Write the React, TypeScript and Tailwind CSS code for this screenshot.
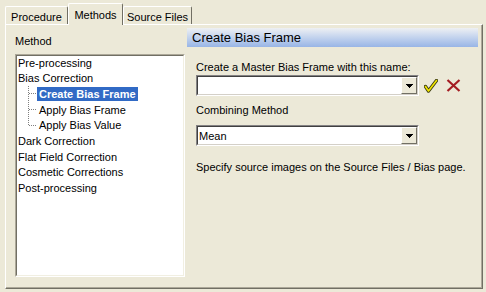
import React from "react";

const font = "[font-family:'Liberation_Sans',Arial,sans-serif]";

function Tab({ label, selected, width }: { label: string; selected?: boolean; width: string }) {
  if (selected) {
    return (
      <div
        className={`${width} relative z-10 -mb-px h-[22px] flex items-start justify-center pt-[4px] bg-[#ece9d8] border-l border-t border-white border-r border-r-[#716f64] rounded-t-[2px]`}
      >
        <span className="leading-[14px]">{label}</span>
      </div>
    );
  }
  return (
    <div
      className={`${width} h-[18px] flex items-start justify-center pt-[3px] bg-[#ece9d8] border-l border-t border-white border-r border-r-[#716f64] rounded-t-[2px]`}
    >
      <span className="leading-[14px]">{label}</span>
    </div>
  );
}

function Connector({ last }: { last?: boolean }) {
  return (
    <svg width="9" height="15.7" className="shrink-0 block" shapeRendering="crispEdges">
      <line x1="0.5" y1="0" x2="0.5" y2={last ? 8 : 15.7} stroke="#808080" strokeDasharray="1 1" />
      <line x1="1" y1="7.5" x2="8" y2="7.5" stroke="#808080" strokeDasharray="1 1" />
    </svg>
  );
}

function Row({ children }: { children: React.ReactNode }) {
  return <div className="h-[15.7px] flex items-center whitespace-nowrap">{children}</div>;
}

function Combo({ value }: { value?: string }) {
  return (
    <div className="w-[223px] h-[21px] border border-t-[#848284] border-l-[#848284] border-b-white border-r-white">
      <div className="w-full h-full border border-t-[#404040] border-l-[#404040] border-b-[#d4d0c8] border-r-[#d4d0c8] bg-white flex items-center">
        <div className="flex-1 pl-[1px] leading-[14px]">{value ?? ""}</div>
        <div className="w-[16px] h-[17px] bg-[#ece9d8] border border-t-white border-l-white border-b-[#716f64] border-r-[#716f64] flex items-center justify-center">
          <svg width="7" height="4" className="block" shapeRendering="crispEdges">
            <polygon points="0,0 7,0 3.5,4" fill="#000" />
          </svg>
        </div>
      </div>
    </div>
  );
}

export default function App() {
  return (
    <div className={`w-[486px] h-[292px] bg-[#ece9d8] overflow-hidden text-[11px] text-black ${font}`}>
      {/* tabs */}
      <div className="h-[24px] flex items-end pl-[5px]">
        <Tab label="Procedure" width="w-[63px]" />
        <Tab label="Methods" width="w-[55px]" selected />
        <Tab label="Source Files" width="w-[69px]" />
      </div>
      {/* panel */}
      <div className="ml-[5px] w-[478px] h-[265px] border-l border-t border-white border-r border-b border-r-[#716f64] border-b-[#716f64]">
        <div className="w-full h-full border-r border-b border-r-[#aca899] border-b-[#aca899] flex">
          {/* left column */}
          <div className="ml-[9px] w-[170px] flex flex-col">
            <div className="pt-[9px] leading-[14px] mb-[6px]">Method</div>
            <div className="h-[223px] border border-t-[#aca899] border-l-[#aca899] border-b-white border-r-white">
              <div className="w-full h-full border border-t-[#716f64] border-l-[#716f64] border-b-[#f1efe2] border-r-[#f1efe2] bg-white">
                <div className="-mt-px pl-[1px]">
                  <Row>Pre-processing</Row>
                  <Row>Bias Correction</Row>
                  <Row>
                    <div className="w-[10px] shrink-0" />
                    <Connector />
                    <span className="bg-[#316ac5] text-white font-bold px-[2px] leading-[14px]">Create Bias Frame</span>
                  </Row>
                  <Row>
                    <div className="w-[10px] shrink-0" />
                    <Connector />
                    <span className="px-[2px]">Apply Bias Frame</span>
                  </Row>
                  <Row>
                    <div className="w-[10px] shrink-0" />
                    <Connector last />
                    <span className="px-[2px]">Apply Bias Value</span>
                  </Row>
                  <Row>Dark Correction</Row>
                  <Row>Flat Field Correction</Row>
                  <Row>Cosmetic Corrections</Row>
                  <Row>Post-processing</Row>
                </div>
              </div>
            </div>
          </div>
          {/* right column */}
          <div className="ml-[2px] w-[291px] pt-[3px] flex flex-col">
            <div className="h-[19px] pl-[5px] flex items-center text-[13px] bg-gradient-to-b from-[#eef0f3] to-[#98b5e6]">
              Create Bias Frame
            </div>
            <div className="pl-[9px] flex flex-col">
              <div className="mt-[13px] leading-[14px]">Create a Master Bias Frame with this name:</div>
              <div className="mt-[1px] flex items-center">
                <Combo />
                <svg width="14" height="14" viewBox="0 0 14 14" className="ml-[5px] block">
                  <path d="M1.5 7.5 L4.5 12 L12.5 1.5" fill="none" stroke="#3a3a10" strokeWidth="3.4" strokeLinejoin="round" strokeLinecap="round" />
                  <path d="M1.5 7.5 L4.5 12 L12.5 1.5" fill="none" stroke="#f2e600" strokeWidth="1.6" strokeLinejoin="round" strokeLinecap="round" />
                </svg>
                <svg width="15" height="13" viewBox="0 0 15 13" className="ml-[8px] block">
                  <path d="M1.5 1 L13.5 12 M13.5 1 L1.5 12" fill="none" stroke="#a41c22" strokeWidth="2.2" />
                </svg>
              </div>
              <div className="mt-[7px] leading-[14px]">Combining Method</div>
              <div className="mt-[8px]">
                <Combo value="Mean" />
              </div>
              <div className="mt-[14px] leading-[14px] whitespace-nowrap">
                Specify source images on the Source Files / Bias page.
              </div>
            </div>
          </div>
        </div>
      </div>
    </div>
  );
}
